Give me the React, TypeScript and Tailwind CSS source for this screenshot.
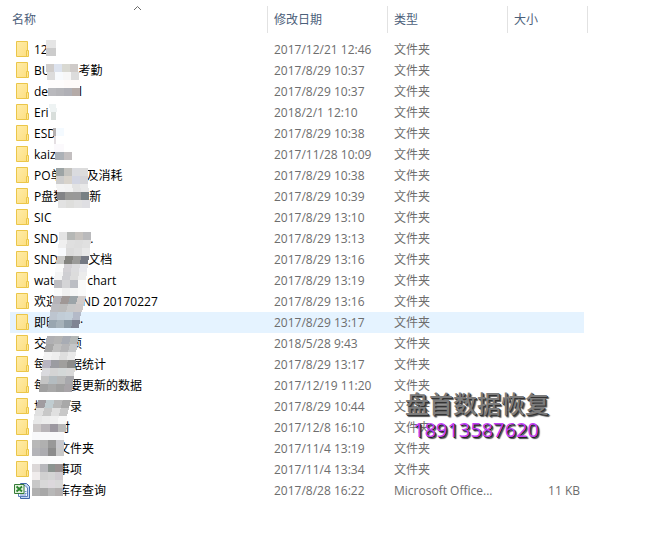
import React from "react";

type Entry = {
  name: string;
  // width of the masked part and the text that follows it
  gap?: number;
  tail?: string;
  date: string;
  type?: string;
  size?: string;
  selected?: boolean;
};

const entries: Entry[] = [
  { name: "12", date: "2017/12/21 12:46" },
  { name: "BU", gap: 28, tail: "考勤", date: "2017/8/29 10:37" },
  { name: "de", gap: 31, tail: "l", date: "2017/8/29 10:37" },
  { name: "Eri", date: "2018/2/1 12:10" },
  { name: "ESD", date: "2017/8/29 10:38" },
  { name: "kaiz", date: "2017/11/28 10:09" },
  { name: "PO单", gap: 24, tail: "及消耗", date: "2017/8/29 10:38" },
  { name: "P盘数", gap: 24, tail: "新", date: "2017/8/29 10:39" },
  { name: "SIC", date: "2017/8/29 13:10" },
  { name: "SND", gap: 32, tail: ".", date: "2017/8/29 13:13" },
  { name: "SND", gap: 30, tail: "文档", date: "2017/8/29 13:16" },
  { name: "wat", gap: 33, tail: "chart", date: "2017/8/29 13:19" },
  { name: "欢迎", gap: 24, tail: "ND 20170227", date: "2017/8/29 13:16" },
  { name: "即时", gap: 22, tail: "·", date: "2017/8/29 13:17", selected: true },
  { name: "交", gap: 24, tail: "项", date: "2018/5/28 9:43" },
  { name: "每", gap: 24, tail: "据统计", date: "2017/8/29 13:17" },
  { name: "每", gap: 24, tail: "要更新的数据", date: "2017/12/19 11:20" },
  { name: "地", gap: 24, tail: "录", date: "2017/8/29 10:44" },
  { name: "", gap: 24, tail: "时", date: "2017/12/8 16:10" },
  { name: "", gap: 24, tail: "文件夹", date: "2017/11/4 13:19" },
  { name: "", gap: 24, tail: "事项", date: "2017/11/4 13:34" },
  { name: "", gap: 24, tail: "库存查询", date: "2017/8/28 16:22", type: "Microsoft Office...", size: "11 KB" },
];

// One strip of 8px mosaic blocks: top, left, right, lean at the bottom edge, colours
type Strip = [number, number, number, number, string[]];

const strips: Strip[] = [
  [40, 46, 56, 0, ["#e5e5e5"]],
  [48, 46, 56, 0, ["#cccccc"]],
  [64, 46, 78, 0, ["#d0cdcb", "#dde3ee", "#d9d9d2", "#cfcbc9"]],
  [72, 47, 79, 0, ["#dcdcdc", "#f7fafd", "#f7f7f7", "#dcdcdc"]],
  [80, 48, 80, 0, ["#fefcfc", "#fefcfc", "#fefaf9", "#fefaf9"]],
  [88, 48, 80, 0, ["#b9b9bd", "#b5b5b9", "#b0b0b6", "#b5aba8"]],
  [104, 49, 56, 1, ["#eef3f3"]],
  [112, 51, 56, 0, ["#d8dedb"]],
  [128, 53, 56, 0, ["#b5b0b0"]],
  [128, 56, 64, 0, ["#f4faff"]],
  [136, 54, 56, 0, ["#e4dfe2"]],
  [144, 54, 64, 0, ["#fbf9fc"]],
  [152, 55, 72, 0, ["#acb1b7", "#c3bfc0"]],
  [168, 56, 88, 0, ["#9da4a5", "#c4c3bf", "#dadbdf", "#dcdcdc"]],
  [176, 56, 88, 0, ["#cdcdcd", "#d8d3cb", "#d2d5e2", "#d4d4d8"]],
  [184, 56, 88, 1, ["#f4f4f4", "#f2f2f2", "#e3e3e3", "#e8e8e8"]],
  [192, 57, 89, 0, ["#838487", "#999997", "#999999", "#788083"]],
  [200, 58, 90, 0, ["#e2e2e2", "#dededc", "#e2e2e2", "#dfdfe3"]],
  [232, 59, 91, 0, ["#e4e4e4", "#b6b8b6", "#c6c2be", "#bababc"]],
  [240, 59, 91, -1, ["#efefef", "#dfdfdf", "#dddddd", "#e0e0e0"]],
  [248, 58, 90, 0, ["#f8fafd", "#dbdbdb", "#dfdfdf", "#e8e8e8"]],
  [256, 57, 89, -1, ["#c8c8c6", "#83837f", "#9b9b99", "#757983"]],
  [264, 56, 88, -1, ["#fafafa", "#d3d1d5", "#dcdcde", "#e8e8ec"]],
  [272, 55, 87, -1, ["#f4f4f4", "#cfcfd3", "#dcdcdc", "#ececec"]],
  [280, 54, 86, 0, ["#bebec2", "#d4d4d6", "#bcbec4", "#fafafa"]],
  [288, 54, 86, 0, ["#fafafa", "#f0f0f0", "#f6f6f6", "#fafafa"]],
  [296, 54, 86, -2, ["#b5b3b8", "#a09896", "#9ca4a8", "#d2ccca"]],
  [304, 52, 84, -2, ["#bcbcc0", "#bcbcbc", "#c8c8c8", "#ccc8c8"]],
  [312, 50, 81, -1, ["#bdc5cf", "#c1ccd6", "#c3cfd9", "#b4bac8"]],
  [320, 49, 80, -1, ["#99a6b0", "#a6b2ba", "#8d9ba6", "#7f8494"]],
  [336, 47, 79, -2, ["#b0b0b3", "#b4b4b4", "#a8acb4", "#b4b8b8"]],
  [344, 46, 78, -2, ["#a7a7a7", "#c0c0c0", "#b5b5b7", "#c4c6c8"]],
  [352, 44, 76, -1, ["#f3f3f3", "#eeeeee", "#dedede", "#e9e9e9"]],
  [360, 43, 76, -1, ["#b8b4c2", "#9b9ca1", "#a09f9d", "#8c8c8a"]],
  [368, 42, 75, -1, ["#dadade", "#d4d4d4", "#d4d8d8", "#d8d8d8"]],
  [376, 41, 74, -1, ["#c4c4c4", "#b4bcc0", "#b8b8b8", "#a8a8ac"]],
  [384, 40, 73, -1, ["#a0a0a0", "#a8a8a8", "#a0a0a0", "#a8a4a8"]],
  [400, 38, 71, -2, ["#a09ca0", "#c0ccd0", "#b8b8b8", "#a8a8a8"]],
  [408, 36, 69, -2, ["#e0e0e0", "#c8c8c8", "#e0e0e0", "#c8c8c8"]],
  [416, 34, 67, -1, ["#e8e8e8", "#ececec", "#f0f0f0", "#f8f8f8"]],
  [424, 33, 66, 0, ["#ccc8c8", "#b8b4b8", "#9c98a0", "#b8b8b8"]],
  [432, 32, 64, 0, ["#f8f8fa", "#f8f8fa", "#f8f8fa", "#f8f8fa"]],
  [440, 32, 64, 0, ["#b8b8b8", "#b0b0b0", "#989898", "#c8c8cc"]],
  [448, 32, 64, 0, ["#b4b4b8", "#acacb0", "#8c8c8c", "#c8c8c8"]],
  [456, 32, 63, 0, ["#fcfcfc", "#fafafa", "#fcfcfc", "#fcfcfc"]],
  [464, 32, 63, 0, ["#dcd8d8", "#b8b8bc", "#8c9490", "#989090"]],
  [472, 32, 63, 0, ["#f0ecec", "#d0d0d0", "#d4d4d4", "#d0ccd0"]],
  [480, 32, 63, 0, ["#c8c8c8", "#d8d8d8", "#dcd8dc", "#d8d8d8"]],
  [488, 32, 63, 0, ["#b0b0b0", "#a8a8a8", "#b8b8b8", "#b4b0b0"]],
];

function Mosaic() {
  return (
    <svg className="absolute left-0 top-0 pointer-events-none" width="100" height="500" shapeRendering="crispEdges" aria-hidden="true">
      {strips.map(([y, x1, x2, lean, colors]) =>
        colors.map((fill, i) => {
          const w = (x2 - x1) / colors.length;
          const a = x1 + i * w;
          const b = a + w;
          return <polygon key={`${y}-${x1}-${i}`} fill={fill} points={`${a},${y} ${b},${y} ${b + lean},${y + 8} ${a + lean},${y + 8}`} />;
        })
      )}
    </svg>
  );
}

function FolderIcon() {
  return (
    <svg width="16" height="17" viewBox="0 0 16 17" className="shrink-0" aria-hidden="true">
      <defs>
        <linearGradient id="folder" x1="0" y1="0" x2="1" y2="1">
          <stop offset="0" stopColor="#ffeca8" />
          <stop offset="1" stopColor="#fddf82" />
        </linearGradient>
      </defs>
      <path d="M2.5.5h11v15h-11z" fill="url(#folder)" stroke="#ebc649" />
      <path d="M12.5 15.5v-6h2v6z" fill="#ffe794" stroke="#ebc649" />
    </svg>
  );
}

function SheetIcon() {
  return (
    <svg width="16" height="16" viewBox="0 0 16 16" className="shrink-0" aria-hidden="true">
      <path d="M6.5.5h6l3 3v12h-9z" fill="#c5d8f5" stroke="#4267a8" />
      <path d="M4.5 2.500h6.500l2.500 2.500v8.500h-9z" fill="#f3f7fe" stroke="#5b7fbd" />
      <path d="M10.500 8.500h2M10.500 10.500h2M6 12h6" fill="none" stroke="#7594ca" />
      <path d="M.5 1.500h9.500v9H.5z" fill="#e4f2df" stroke="#367b38" />
      <path d="M2.500 3.500l5.500 5M8 3.500l-5.500 5" stroke="#2d8530" strokeWidth="1.800" />
    </svg>
  );
}

function HeaderCell({ children, last = false }: { children: React.ReactNode; last?: boolean }) {
  return (
    <th scope="col" className="h-[39px] p-0 pb-1.5 pt-1.5 align-top font-normal text-left">
      <div className={`flex h-[27px] items-center border-r border-[#e2e2e2] pl-1.5 ${last ? "-mr-1" : ""}`}>
        {children}
      </div>
    </th>
  );
}

function FileRow({ entry }: { entry: Entry }) {
  return (
    <tr className={`h-[21px] ${entry.selected ? "bg-[#e5f3ff]" : ""}`}>
      <td className="p-0">
        <div className="flex h-[21px] items-center gap-1 pl-1 text-black">
          {entry.type ? <SheetIcon /> : <FolderIcon />}
          <span className="flex whitespace-nowrap">
            {entry.name}
            {entry.gap && <span style={{ width: entry.gap }} />}
            {entry.tail}
          </span>
        </div>
      </td>
      <td className="p-0 pl-1.5 whitespace-nowrap">{entry.date}</td>
      <td className="p-0 pl-1.5 whitespace-nowrap">{entry.type ?? "文件夹"}</td>
      <td className="p-0 pr-1 text-right whitespace-nowrap">{entry.size}</td>
    </tr>
  );
}

export default function App() {
  return (
    <main className="relative min-h-screen bg-white pl-2.5 font-['Open_Sans','Noto_Sans_CJK_SC',sans-serif] text-[12px] leading-5 text-[#6d6d6d]">
      <table className="w-full max-w-[574px] table-fixed border-collapse">
        <colgroup>
          <col className="w-[258px]" />
          <col className="w-[120px]" />
          <col className="w-[120px]" />
          <col />
        </colgroup>
        <thead className="text-[#4c607a]">
          <tr>
            <HeaderCell>
              <span className="-ml-1">名称</span>
            </HeaderCell>
            <HeaderCell>修改日期</HeaderCell>
            <HeaderCell>类型</HeaderCell>
            <HeaderCell last>大小</HeaderCell>
          </tr>
        </thead>
        <tbody>
          {entries.map((entry) => (
            <FileRow key={entry.date + entry.name + entry.tail} entry={entry} />
          ))}
        </tbody>
      </table>

      {/* Sort arrow above the name column */}
      <svg className="absolute left-[133px] top-[5px]" width="9" height="6" viewBox="0 0 9 6" aria-hidden="true">
        <path d="M1 5l3.500-3.500L8 5" fill="none" stroke="#6b6b6b" />
      </svg>

      <Mosaic />

      {/* Watermark */}
      <div className="absolute left-[405px] top-[390px]">
        <div className="text-2xl leading-7 font-medium text-[#7c7c7c] [text-shadow:1px_1px_0_#333,2px_2px_1px_#555]">盘首数据恢复</div>
        <div className="pl-2 text-xl leading-6 font-medium text-[#c43ff8] [text-shadow:1px_1px_0_#222,2px_2px_1px_#444]">18913587620</div>
      </div>
    </main>
  );
}
